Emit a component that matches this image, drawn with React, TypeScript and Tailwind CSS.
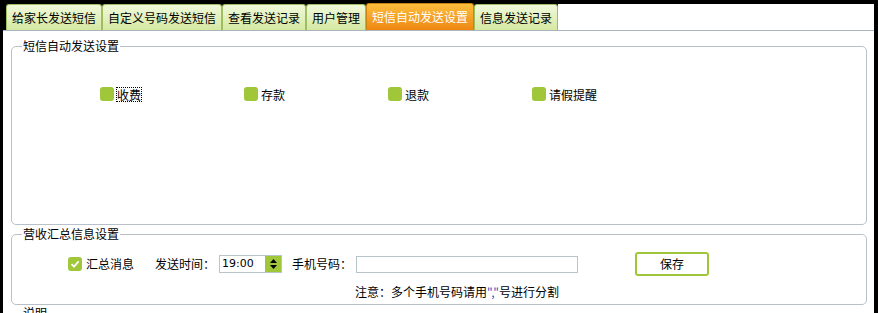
import React from 'react';

const font = { fontFamily: '"Noto Sans CJK SC", "Liberation Sans", sans-serif' };

const tabs = ['给家长发送短信', '自定义号码发送短信', '查看发送记录', '用户管理', '短信自动发送设置', '信息发送记录'];
const ACTIVE = 4;

const GreenBox: React.FC<{ checked?: boolean }> = ({ checked }) => (
  <span className="flex h-[14px] w-[14px] shrink-0 items-center justify-center rounded-[3px] bg-[#a0c63a]">
    {checked && (
      <svg width="10" height="10" viewBox="0 0 10 10">
        <path d="M1.5 5.2 L4 7.6 L8.6 2.4" fill="none" stroke="#fff" strokeWidth="1.8" />
      </svg>
    )}
  </span>
);

const Option: React.FC<{ label: string; focus?: boolean }> = ({ label, focus }) => (
  <div className="flex w-[144px] items-center gap-[3px]">
    <GreenBox />
    <span className={focus ? 'outline outline-1 outline-dotted outline-black leading-[13px]' : 'leading-[13px]'}>{label}</span>
  </div>
);

export default function App() {
  return (
    <div className="h-[313px] w-[878px] overflow-hidden bg-black pt-[4px] pl-[3px] pr-[4px] text-[12px] text-black" style={font}>
      <div className="h-full bg-white">
        {/* tab strip */}
        <div className="flex h-[27px] items-end border-b border-[#aab4bc] bg-black pl-[3px]">
          {tabs.map((t, i) =>
            i === ACTIVE ? (
              <div
                key={t}
                className="flex h-[27px] items-center rounded-t-[3px] border border-b-0 border-[#c98315] bg-gradient-to-b from-[#fbbd3c] to-[#ee870f] px-[5px] leading-none text-white"
              >
                {t}
              </div>
            ) : (
              <div
                key={t}
                className="flex h-[26px] items-center rounded-t-[3px] border border-b-0 border-[#9fbe62] bg-gradient-to-b from-[#f0f8da] to-[#d5e9a2] px-[5px] leading-none"
              >
                {t}
              </div>
            )
          )}
          <div className="h-[26px] flex-1 bg-white" />
        </div>

        {/* auto send settings */}
        <fieldset className="mx-[8px] mr-[7px] mt-[8px] h-[186px] rounded-[5px] border border-[#b8c1ca] px-0">
          <legend className="ml-[10px] px-[1px] leading-[14px]">短信自动发送设置</legend>
          <div className="flex pl-[88px] pt-[34px]">
            <Option label="收费" focus />
            <Option label="存款" />
            <Option label="退款" />
            <Option label="请假提醒" />
          </div>
        </fieldset>

        {/* summary settings */}
        <fieldset className="mx-[8px] mr-[7px] mt-[2px] h-[78px] rounded-[5px] border border-[#b8c1ca] px-0">
          <legend className="ml-[10px] px-[1px] leading-[14px]">营收汇总信息设置</legend>
          <div className="flex items-center pl-[56px] pt-[11px]">
            <GreenBox checked />
            <span className="ml-[4px]">汇总消息</span>
            <span className="ml-[21px]">发送时间：</span>
            <div className="ml-[4px] flex h-[18px] w-[63px] items-stretch border border-[#b8c4cc]">
              <span className="flex-1 pl-[2px] leading-[16px]" style={{ fontFamily: '"DejaVu Sans", sans-serif', fontSize: 11 }}>19:00</span>
              <span className="flex w-[16px] flex-col items-center justify-center gap-[2px] bg-[#a0c63a]">
                <svg width="7" height="4" viewBox="0 0 7 4"><path d="M3.5 0 L7 4 L0 4 Z" fill="#000" /></svg>
                <svg width="7" height="4" viewBox="0 0 7 4"><path d="M0 0 L7 0 L3.5 4 Z" fill="#000" /></svg>
              </span>
            </div>
            <span className="ml-[10px]">手机号码：</span>
            <div className="ml-[4px] h-[17px] w-[222px] border border-[#b8c4cc]" />
            <button className="ml-[57px] h-[24px] w-[74px] rounded-[3px] border-2 border-[#a0c63a] bg-white text-[12px] leading-none">
              保存
            </button>
          </div>
          <div className="pl-[343px] pt-[9px] leading-[14px]">
            注意：多个手机号码请用<span className="text-[#2a52c8]">","</span>号进行分割
          </div>
        </fieldset>

        {/* notes */}
        <fieldset className="mx-[8px] mr-[7px] mt-[1px] h-[40px] rounded-[5px] border border-[#b8c1ca] px-0">
          <legend className="ml-[10px] px-[1px] leading-[14px]">说明</legend>
        </fieldset>
      </div>
    </div>
  );
}
